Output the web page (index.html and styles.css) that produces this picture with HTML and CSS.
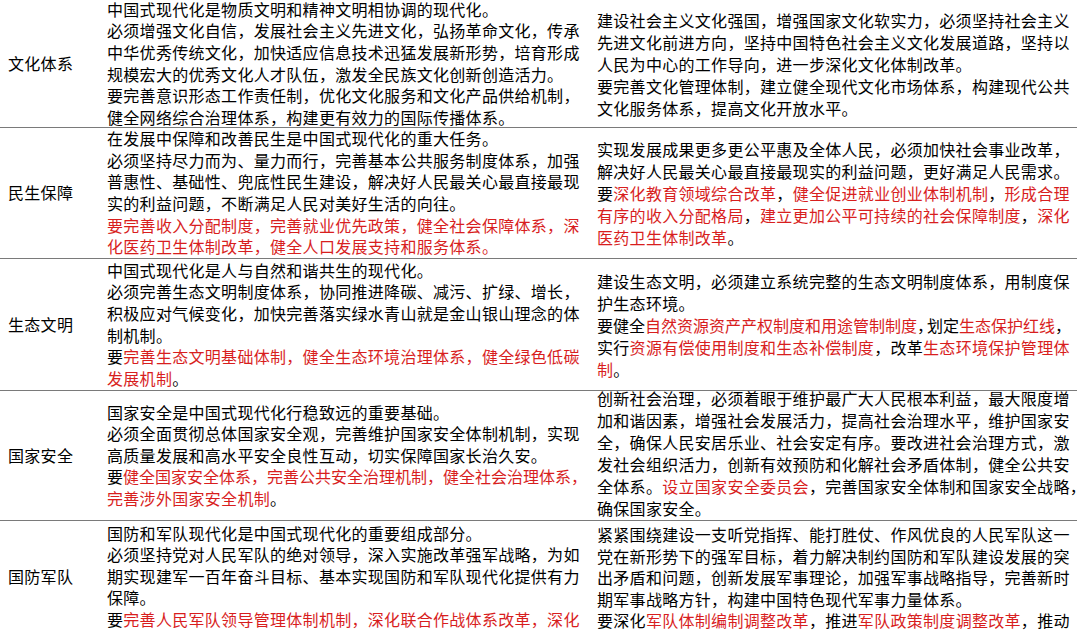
FILE: index.html
```html
<!DOCTYPE html>
<html lang="zh-CN">
<head>
<meta charset="utf-8">
<title>中国式现代化</title>
<link rel="stylesheet" href="styles.css">
</head>
<body>
<div class="table">
  <div class="row row-1">
    <div class="label">文化体系</div>
    <div class="mid">
      <span class="ln">中国式现代化是物质文明和精神文明相协调的现代化。</span>
      <span class="ln">必须增强文化自信，发展社会主义先进文化，弘扬革命文化，传承</span>
      <span class="ln">中华优秀传统文化，加快适应信息技术迅猛发展新形势，培育形成</span>
      <span class="ln">规模宏大的优秀文化人才队伍，激发全民族文化创新创造活力。</span>
      <span class="ln">要完善意识形态工作责任制，优化文化服务和文化产品供给机制，</span>
      <span class="ln">健全网络综合治理体系，构建更有效力的国际传播体系。</span>
    </div>
    <div class="right">
      <span class="ln">建设社会主义文化强国，增强国家文化软实力，必须坚持社会主义</span>
      <span class="ln">先进文化前进方向，坚持中国特色社会主义文化发展道路，坚持以</span>
      <span class="ln">人民为中心的工作导向，进一步深化文化体制改革。</span>
      <span class="ln">要完善文化管理体制，建立健全现代文化市场体系，构建现代公共</span>
      <span class="ln">文化服务体系，提高文化开放水平。</span>
    </div>
  </div>

  <div class="row row-2">
    <div class="label">民生保障</div>
    <div class="mid">
      <span class="ln">在发展中保障和改善民生是中国式现代化的重大任务。</span>
      <span class="ln">必须坚持尽力而为、量力而行，完善基本公共服务制度体系，加强</span>
      <span class="ln">普惠性、基础性、兜底性民生建设，解决好人民最关心最直接最现</span>
      <span class="ln">实的利益问题，不断满足人民对美好生活的向往。</span>
      <span class="ln red">要完善收入分配制度，完善就业优先政策，健全社会保障体系，深</span>
      <span class="ln red">化医药卫生体制改革，健全人口发展支持和服务体系。</span>
    </div>
    <div class="right">
      <span class="ln">实现发展成果更多更公平惠及全体人民，必须加快社会事业改革，</span>
      <span class="ln">解决好人民最关心最直接最现实的利益问题，更好满足人民需求。</span>
      <span class="ln">要<em class="red">深化教育领域综合改革</em>，<em class="red">健全促进就业创业体制机制</em>，<em class="red">形成合理</em></span>
      <span class="ln"><em class="red">有序的收入分配格局</em>，<em class="red">建立更加公平可持续的社会保障制度</em>，<em class="red">深化</em></span>
      <span class="ln"><em class="red">医药卫生体制改革</em>。</span>
    </div>
  </div>

  <div class="row row-3">
    <div class="label">生态文明</div>
    <div class="mid">
      <span class="ln">中国式现代化是人与自然和谐共生的现代化。</span>
      <span class="ln">必须完善生态文明制度体系，协同推进降碳、减污、扩绿、增长，</span>
      <span class="ln">积极应对气候变化，加快完善落实绿水青山就是金山银山理念的体</span>
      <span class="ln">制机制。</span>
      <span class="ln">要<em class="red">完善生态文明基础体制，健全生态环境治理体系，健全绿色低碳</em></span>
      <span class="ln"><em class="red">发展机制</em>。</span>
    </div>
    <div class="right">
      <span class="ln">建设生态文明，必须建立系统完整的生态文明制度体系，用制度保</span>
      <span class="ln">护生态环境。</span>
      <span class="ln tight">要健全<em class="red">自然资源资产产权制度和用途管制制度</em><span class="narrow">，</span>划定<em class="red">生态保护红线</em>，</span>
      <span class="ln">实行<em class="red">资源有偿使用制度和生态补偿制度</em>，改革<em class="red">生态环境保护管理体</em></span>
      <span class="ln"><em class="red">制</em>。</span>
    </div>
  </div>

  <div class="row row-4">
    <div class="label">国家安全</div>
    <div class="mid">
      <span class="ln">国家安全是中国式现代化行稳致远的重要基础。</span>
      <span class="ln">必须全面贯彻总体国家安全观，完善维护国家安全体制机制，实现</span>
      <span class="ln">高质量发展和高水平安全良性互动，切实保障国家长治久安。</span>
      <span class="ln tight">要<em class="red">健全国家安全体系，完善公共安全治理机制，健全社会治理体系，</em></span>
      <span class="ln"><em class="red">完善涉外国家安全机制</em>。</span>
    </div>
    <div class="right right-tall">
      <span class="ln">创新社会治理，必须着眼于维护最广大人民根本利益，最大限度增</span>
      <span class="ln">加和谐因素，增强社会发展活力，提高社会治理水平，维护国家安</span>
      <span class="ln">全，确保人民安居乐业、社会安定有序。要改进社会治理方式，激</span>
      <span class="ln">发社会组织活力，创新有效预防和化解社会矛盾体制，健全公共安</span>
      <span class="ln">全体系。<em class="red">设立国家安全委员会</em>，完善国家安全体制和国家安全战略，</span>
      <span class="ln">确保国家安全。</span>
    </div>
  </div>

  <div class="row row-5">
    <div class="label">国防军队</div>
    <div class="mid">
      <span class="ln">国防和军队现代化是中国式现代化的重要组成部分。</span>
      <span class="ln">必须坚持党对人民军队的绝对领导，深入实施改革强军战略，为如</span>
      <span class="ln">期实现建军一百年奋斗目标、基本实现国防和军队现代化提供有力</span>
      <span class="ln">保障。</span>
      <span class="ln">要<em class="red">完善人民军队领导管理体制机制，深化联合作战体系改革，深化</em></span>
    </div>
    <div class="right right-low">
      <span class="ln">紧紧围绕建设一支听党指挥、能打胜仗、作风优良的人民军队这一</span>
      <span class="ln">党在新形势下的强军目标，着力解决制约国防和军队建设发展的突</span>
      <span class="ln">出矛盾和问题，创新发展军事理论，加强军事战略指导，完善新时</span>
      <span class="ln">期军事战略方针，构建中国特色现代军事力量体系。</span>
      <span class="ln">要深化<em class="red">军队体制编制调整改革</em>，推进<em class="red">军队政策制度调整改革</em>，推动</span>
    </div>
  </div>
</div>
</body>
</html>
```

FILE: styles.css
```css
html, body {
  margin: 0;
  padding: 0;
  background: #ffffff;
  overflow: hidden;
}

body {
  font-family: "Noto Sans CJK SC", "Noto Sans", sans-serif;
  font-size: 16px;
  letter-spacing: 0.3px;
  color: #000000;
}

.table {
  width: 1080px;
  height: 630px;
  overflow: hidden;
}

.row {
  width: 1077px;
  display: grid;
  grid-template-columns: 107px 490px 1fr;
  box-sizing: border-box;
  border-bottom: 1px solid #7a7a7a;
}

.row-1 { height: 128px; }
.row-2 { height: 131px; }
.row-3 { height: 132px; }
.row-4 { height: 130px; }
.row-5 { height: 112px; }

.label,
.mid,
.right {
  display: flex;
  flex-direction: column;
  justify-content: center;
  min-height: 0;
}

.label {
  padding-left: 8px;
  line-height: 21.6px;
  white-space: nowrap;
}

.mid {
  line-height: 21.6px;
}

.right {
  line-height: 22px;
}

.right-tall {
  padding-bottom: 5px;
}

.right-low {
  line-height: 21.6px;
  padding-top: 3px;
}

.ln {
  display: block;
  white-space: nowrap;
}

.tight {
  letter-spacing: 0;
}

.narrow {
  letter-spacing: -6px;
}

.red {
  color: #d81e1e;
}

em {
  font-style: normal;
}
```
